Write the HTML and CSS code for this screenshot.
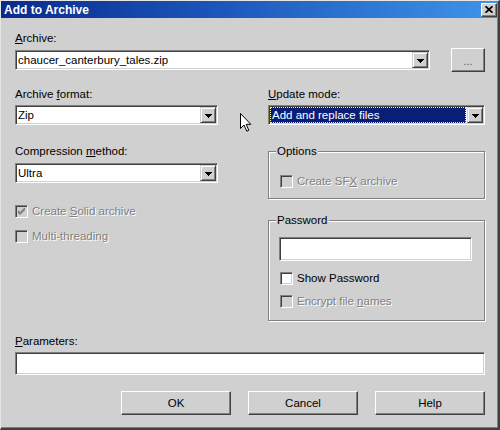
FILE: index.html
```html
<!DOCTYPE html>
<html>
<head>
<meta charset="utf-8">
<title>Add to Archive</title>
<link rel="stylesheet" href="styles.css">
</head>
<body>
<div class="window">
  <div class="titlebar">
    <span class="title">Add to Archive</span>
    <span class="close"><svg width="8" height="7" viewBox="0 0 8 7"><path d="M0.5 0.2 L7.5 6.8 M7.5 0.2 L0.5 6.8" stroke="#000" stroke-width="1.7" fill="none"/></svg></span>
  </div>
  <div class="content">
    <div class="label first"><u>A</u>rchive:</div>
    <div class="archive-row">
      <div class="field combo archive-combo">
        <span class="value">chaucer_canterbury_tales.zip</span>
        <span class="drop"><svg width="7" height="4" viewBox="0 0 7 4"><polygon points="0,0 7,0 3.5,4" fill="#000"/></svg></span>
      </div>
      <div class="btn browse">...</div>
    </div>
    <div class="cols">
      <div class="col col-left">
        <div class="label">Archive <u>f</u>ormat:</div>
        <div class="field combo">
          <span class="value">Zip</span>
          <span class="drop"><svg width="7" height="4" viewBox="0 0 7 4"><polygon points="0,0 7,0 3.5,4" fill="#000"/></svg></span>
        </div>
        <div class="label gap-label">Compression <u>m</u>ethod:</div>
        <div class="field combo">
          <span class="value">Ultra</span>
          <span class="drop"><svg width="7" height="4" viewBox="0 0 7 4"><polygon points="0,0 7,0 3.5,4" fill="#000"/></svg></span>
        </div>
        <div class="check disabled solid">
          <span class="box"><svg width="7" height="7" viewBox="0 0 7 7"><polygon points="0,2 2,4 6,0 7,0 7,2 2,7 0,5" fill="#808080"/></svg></span>
          <span class="text">Create <u>S</u>olid archive</span>
        </div>
        <div class="check disabled multi">
          <span class="box"></span>
          <span class="text">Multi-threading</span>
        </div>
      </div>
      <div class="col col-right">
        <div class="label"><u>U</u>pdate mode:</div>
        <div class="field combo">
          <span class="value selected">Add and replace files</span>
          <span class="drop"><svg width="7" height="4" viewBox="0 0 7 4"><polygon points="0,0 7,0 3.5,4" fill="#000"/></svg></span>
        </div>
        <div class="group options">
          <span class="legend">Options</span>
          <div class="check disabled">
            <span class="box"></span>
            <span class="text">Create SF<u>X</u> archive</span>
          </div>
        </div>
        <div class="group password">
          <span class="legend">Password</span>
          <div class="field edit pw"></div>
          <div class="check show">
            <span class="box"></span>
            <span class="text">Show Password</span>
          </div>
          <div class="check disabled encrypt">
            <span class="box"></span>
            <span class="text">Encrypt file <u>n</u>ames</span>
          </div>
        </div>
      </div>
    </div>
    <div class="label params-label"><u>P</u>arameters:</div>
    <div class="field edit params"></div>
    <div class="buttons">
      <div class="btn action">OK</div>
      <div class="btn action">Cancel</div>
      <div class="btn action">Help</div>
    </div>
  </div>
  <svg class="cursor" width="12" height="19" viewBox="0 0 12 19"><path d="M0.5 0.5 L0.5 15.5 L4 12 L6.8 18.2 L8.8 17.3 L6.2 11.3 L10.8 11.3 Z" fill="#fff" stroke="#000" stroke-width="1" stroke-linejoin="miter"/></svg>
</div>
</body>
</html>
```
FILE: styles.css
```css
* { box-sizing: border-box; }
html, body { margin: 0; padding: 0; }
body {
  width: 500px;
  height: 430px;
  overflow: hidden;
  background: #d0d0d0;
  font-family: "Liberation Sans", Arial, sans-serif;
  font-size: 11.5px;
  line-height: 13px;
  color: #000;
}
u { text-decoration: underline; text-underline-offset: 1px; }

.window {
  position: relative;
  width: 500px;
  height: 430px;
  background: #d0d0d0;
  border-top: 1px solid #e6e6e6;
  border-left: 1px solid #e6e6e6;
  border-right: 2px solid #404040;
  border-bottom: 2px solid #404040;
  box-shadow: inset -1px -1px 0 #808080;
}

.titlebar {
  height: 17px;
  display: flex;
  align-items: center;
  justify-content: space-between;
  background: linear-gradient(90deg, #0a2a8c 0%, #1c58bc 45%, #3f94e8 100%);
  padding-left: 3px;
}
.title {
  color: #fff;
  font-weight: bold;
  font-size: 12px;
  line-height: 16px;
  padding-top: 1px;
}
.close {
  width: 16px;
  height: 14px;
  margin-right: 1px;
  display: flex;
  align-items: center;
  justify-content: center;
  background: #d0d0d0;
  border: 1px solid;
  border-color: #fff #404040 #404040 #fff;
  box-shadow: inset -1px -1px 0 #808080;
}

.content {
  padding: 0 13px 0 14px;
}

.label { height: 13px; white-space: nowrap; }
.label.first { margin-top: 14px; }

.field {
  background: #fff;
  border: 1px solid;
  border-color: #808080 #fff #fff #808080;
  box-shadow: inset 1px 1px 0 #404040, inset -1px -1px 0 #d0d0d0;
  padding: 1px;
}
.combo {
  height: 20px;
  display: flex;
  align-items: stretch;
}
.combo .value {
  flex: 1;
  padding-left: 1px;
  line-height: 16px;
  white-space: nowrap;
  overflow: hidden;
}
.combo .value.selected {
  background: #0a1e78;
  color: #fff;
  margin-right: 1px;
  border: 1px dotted #f0f0a0;
  line-height: 14px;
  padding-left: 1px;
}
.drop {
  width: 16px;
  height: 16px;
  display: flex;
  align-items: center;
  justify-content: center;
  background: #d0d0d0;
  border: 1px solid;
  border-color: #d0d0d0 #404040 #404040 #d0d0d0;
  box-shadow: inset 1px 1px 0 #fff, inset -1px -1px 0 #808080;
}
.drop svg { shape-rendering: crispEdges; margin-top: 1px; }

.archive-row {
  margin-top: 3px;
  height: 24px;
  display: flex;
  align-items: center;
}
.archive-combo { width: 415px; }

.btn {
  background: #d0d0d0;
  border: 1px solid;
  border-color: #fff #404040 #404040 #fff;
  box-shadow: inset -1px -1px 0 #808080;
  display: flex;
  align-items: center;
  justify-content: center;
  color: #000;
}
.browse {
  width: 34px;
  height: 24px;
  margin-left: 21px;
  color: #606060;
  padding-top: 2px;
}

.cols {
  margin-top: 16px;
  display: flex;
  justify-content: space-between;
}
.col-left { width: 203px; }
.col-right { width: 217px; }
.col .combo { margin-top: 4px; }
.col-left .gap-label { margin-top: 20px; }
.col-left .gap-label + .combo { margin-top: 5px; }

.check {
  display: flex;
  align-items: center;
  height: 13px;
  white-space: nowrap;
}
.check .box {
  width: 13px;
  height: 13px;
  flex: none;
  background: #fff;
  border: 1px solid;
  border-color: #808080 #fff #fff #808080;
  box-shadow: inset 1px 1px 0 #404040, inset -1px -1px 0 #d0d0d0;
  display: flex;
  align-items: center;
  justify-content: center;
}
.check .text { margin-left: 4px; }
.check.disabled .box { background: #d0d0d0; }
.check.disabled .text { color: #808080; text-shadow: 1px 1px 0 #fff; }
.check.solid { margin-top: 22px; }
.check.multi { margin-top: 12px; }

.group {
  position: relative;
  border: 1px solid #808080;
  box-shadow: inset 1px 1px 0 #fff, 1px 1px 0 #fff;
  padding: 0 12px 0 11px;
}
.legend {
  position: absolute;
  top: -7px;
  left: 7px;
  padding: 0 1px;
  height: 13px;
  background: #d0d0d0;
}
.options {
  margin-top: 26px;
  padding-top: 23px;
  padding-bottom: 10px;
}
.password {
  margin-top: 21px;
  padding-top: 16px;
  padding-bottom: 12px;
}
.edit.pw {
  height: 24px;
  margin-left: -1px;
}
.check.show { margin-top: 11px; }
.check.encrypt { margin-top: 10px; }

.params-label { margin-top: 14px; }
.edit.params {
  margin-top: 4px;
  height: 23px;
}

.buttons {
  margin-top: 16px;
  display: flex;
  justify-content: flex-end;
  gap: 17px;
}
.btn.action {
  width: 110px;
  height: 24px;
}

.cursor {
  position: absolute;
  left: 239px;
  top: 112px;
}
```
